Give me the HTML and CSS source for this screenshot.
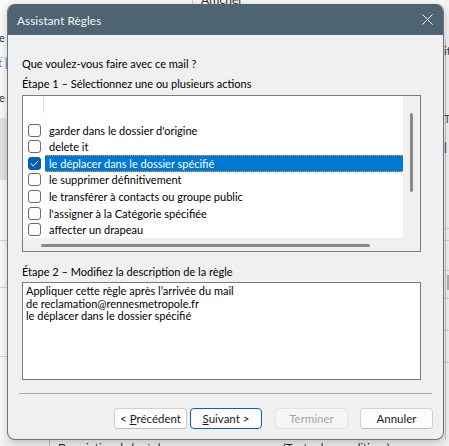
FILE: index.html
```html
<!DOCTYPE html>
<html lang="fr">
<head>
<meta charset="utf-8">
<title>Assistant Règles</title>
<link rel="stylesheet" href="styles.css">
</head>
<body>
<div class="backdrop">
  <div class="bg-top-text">Afficher</div>
  <div class="bg-top-line"></div>
  <div class="bg-left">
    <div class="bl-text bl-se">Se</div>
    <div class="bl-line bl-l1"></div>
    <div class="bl-text bl-t">t |</div>
    <div class="bl-text bl-e">e</div>
    <div class="bl-band"></div>
    <div class="bl-line bl-l2"></div>
    <div class="bl-line bl-l3"></div>
    <div class="bl-line bl-l4"></div>
  </div>
  <div class="bg-right">
    <div class="br-vline"></div>
    <div class="br-text br-it">it</div>
    <div class="br-text br-te">Te</div>
    <div class="br-text br-bar">|</div>
    <div class="br-line br-l1"></div>
    <div class="br-line br-l2"></div>
    <div class="br-line br-l3"></div>
    <div class="br-line br-l4"></div>
    <div class="br-line br-l5"></div>
    <div class="br-line br-l6"></div>
    <div class="br-block"></div>
  </div>
  <div class="bg-bottom">
    <div class="bb-vline"></div>
    <div class="bb-text bb-t1">Description de la règle</div>
    <div class="bb-text bb-t2">(Toutes les conditions)</div>
  </div>
</div>

<div class="dialog">
  <div class="titlebar">
    <span class="title">Assistant Règles</span>
    <svg class="close" width="11" height="11" viewBox="0 0 11 11"><path d="M0.5 0.5 L10.5 10.5 M10.5 0.5 L0.5 10.5" stroke="#ffffff" stroke-width="1" fill="none"/></svg>
  </div>
  <div class="content">
    <div class="label">Que voulez-vous faire avec ce mail ?</div>
    <div class="label step1">Étape 1 – Sélectionnez une ou plusieurs actions</div>
    <div class="listbox">
      <div class="list-main">
        <div class="list-view">
          <div class="list-head"><span class="head-sep"></span></div>
          <div class="row"><span class="cb"></span><span class="txt">garder dans le dossier d'origine</span></div>
          <div class="row"><span class="cb"></span><span class="txt">delete it</span></div>
          <div class="row selected"><span class="cb checked"><svg width="9" height="7" viewBox="0 0 9 7"><path d="M0.8 3.6 L3.2 5.9 L8.2 0.9" stroke="#ffffff" stroke-width="1" fill="none"/></svg></span><span class="txt">le déplacer dans le dossier spécifié</span></div>
          <div class="row"><span class="cb"></span><span class="txt">le supprimer définitivement</span></div>
          <div class="row"><span class="cb"></span><span class="txt">le transférer à contacts ou groupe public</span></div>
          <div class="row"><span class="cb"></span><span class="txt">l'assigner à la Catégorie spécifiée</span></div>
          <div class="row"><span class="cb"></span><span class="txt">affecter un drapeau</span></div>
        </div>
        <div class="vscroll"><div class="vthumb"></div></div>
      </div>
      <div class="hscroll"><div class="hthumb"></div></div>
    </div>
    <div class="label step2">Étape 2 – Modifiez la description de la règle</div>
    <div class="desc">
      <div class="desc-line">Appliquer cette règle après l’arrivée du mail</div>
      <div class="desc-line">de reclamation@rennesmetropole.fr</div>
      <div class="desc-line">le déplacer dans le dossier spécifié</div>
    </div>
    <div class="sep"></div>
    <div class="buttons">
      <button class="btn btn-prev"><span class="btn-label">&lt; <u>P</u>récédent</span></button>
      <button class="btn btn-next"><span class="btn-label"><u>S</u>uivant &gt;</span></button>
      <button class="btn btn-finish" disabled><span class="btn-label">Terminer</span></button>
      <button class="btn btn-cancel"><span class="btn-label">Annuler</span></button>
    </div>
  </div>
</div>
</body>
</html>
```

FILE: styles.css
```css
* { box-sizing: border-box; margin: 0; padding: 0; }
html, body { width: 449px; height: 446px; overflow: hidden; }
body {
  position: relative;
  background: #f6f6f6;
  font-family: "Lato", "Noto Sans", sans-serif;
  font-size: 11px;
  color: #000;
}

/* ---------- backdrop (outlook window behind the dialog) ---------- */
.backdrop { position: absolute; inset: 0; }
.bg-top-text { position: absolute; left: 201px; top: -8px; font-size: 12px; color: #333; }
.bg-top-line { position: absolute; left: 192px; top: 0; width: 1px; height: 5px; background: #c8c8c8; }
.bg-left { position: absolute; left: 0; top: 0; width: 8px; height: 446px; background: #fafafa; }
.bl-text { position: absolute; font-size: 11px; color: #333; }
.bl-se { left: -7px; top: 31px; }
.bl-t { left: -2px; top: 56px; color: #2a6db0; }
.bl-e { left: -1px; top: 91px; }
.bl-band { position: absolute; left: 0; top: 118px; width: 8px; height: 62px; background: #e3e3e3; }
.bl-line { position: absolute; left: 0; width: 8px; height: 1px; background: #d6d6d6; }
.bl-l1 { top: 57px; }
.bl-l2 { top: 240px; }
.bl-l3 { top: 287px; }
.bl-l4 { top: 356px; }

.bg-right { position: absolute; left: 443px; top: 0; width: 6px; height: 446px; background: #f3f3f3; }
.br-vline { position: absolute; left: 2px; top: 40px; width: 1px; height: 400px; background: #c9c9c9; }
.br-text { position: absolute; font-size: 11px; color: #333; }
.br-it { left: 1px; top: 44px; }
.br-te { left: 1px; top: 112px; color: #6b4a2a; }
.br-bar { left: 1px; top: 140px; color: #3b3b8a; font-weight: bold; }
.br-line { position: absolute; left: 0; width: 6px; height: 1px; background: #d0d0d0; }
.br-l1 { top: 228px; }
.br-l2 { top: 240px; }
.br-l3 { top: 270px; }
.br-l4 { top: 298px; }
.br-l5 { top: 330px; }
.br-l6 { top: 362px; }
.br-block { position: absolute; left: 4px; top: 275px; width: 2px; height: 15px; background: #b0b0b0; }

.bg-bottom { position: absolute; left: 0; top: 440px; width: 449px; height: 6px; background: #f2f2f2; overflow: hidden; }
.bb-vline { position: absolute; left: 49px; top: 0; width: 1px; height: 6px; background: #bdbdbd; }
.bb-text { position: absolute; top: 1px; font-size: 11px; color: #222; }
.bb-t1 { left: 58px; }
.bb-t2 { left: 283px; }

/* ---------- dialog ---------- */
.dialog {
  position: absolute;
  left: 7px;
  top: 4px;
  width: 437px;
  height: 436px;
  display: flex;
  flex-direction: column;
  background: #f0f0f0;
  border: 1px solid #6f7377;
  border-top: 0;
  border-radius: 8px;
  overflow: hidden;
  box-shadow: 0 3px 10px rgba(0, 0, 0, 0.22);
}
.titlebar {
  flex: 0 0 31px;
  height: 31px;
  background: #4f6472;
  display: flex;
  align-items: center;
  justify-content: space-between;
  padding: 0 10px 0 9px;
}
.title { color: #f4f6f7; font-size: 11.7px; letter-spacing: 0.1px; }
.close { display: block; }

.content {
  flex: 1;
  display: flex;
  flex-direction: column;
  padding: 21px 10px 10px 14px;
}
.label { height: 16px; line-height: 16px; white-space: nowrap; }
.step1 { margin-top: 4px; }
.step2 { margin-top: 12px; }

/* ---------- list box ---------- */
.listbox {
  margin-top: 3px;
  width: 399px;
  height: 157px;
  border: 1px solid #7a7d80;
  background: #f0f0f0;
  display: flex;
  flex-direction: column;
}
.list-main { flex: 0 0 140px; display: flex; }
.list-view {
  flex: 1;
  background: #ffffff;
  border-bottom-right-radius: 3px;
  overflow: hidden;
}
.list-head { height: 25.7px; position: relative; }
.head-sep { position: absolute; left: 20px; top: 0; width: 1px; height: 17px; background: #e2e2e2; }
.row { height: 16.67px; display: flex; align-items: center; white-space: nowrap; }
.cb {
  flex: 0 0 13px;
  width: 13px;
  height: 13px;
  margin-left: 5px;
  margin-right: 4px;
  border: 1px solid #6b6b6b;
  border-radius: 3px;
  background: #fdfdfd;
  display: flex;
  align-items: center;
  justify-content: center;
}
.cb.checked { background: #005fb8; border-color: #005fb8; }
.cb svg { display: block; }
.txt { flex: 1; height: 100%; display: flex; align-items: center; padding-left: 4px; }
.selected .txt {
  background: #0078d4;
  color: #ffffff;
  border-top: 1px dotted #e8a33a;
  border-bottom: 1px dotted #e8a33a;
}
.vscroll { flex: 0 0 17px; position: relative; }
.vthumb { position: absolute; left: 7px; top: 17px; width: 3px; height: 79px; border-radius: 2px; background: #8a8a8a; }
.hscroll { flex: 1; position: relative; }
.hthumb { position: absolute; left: 18px; top: 6px; width: 329px; height: 3px; border-radius: 2px; background: #8a8a8a; }

/* ---------- description ---------- */
.desc {
  margin-top: 2px;
  width: 399px;
  height: 98px;
  border: 1px solid #7a7d80;
  background: #ffffff;
  padding: 2px 3px;
}
.desc-line { height: 12.5px; line-height: 12.5px; white-space: nowrap; }

.sep {
  margin-top: 13px;
  margin-left: -3px;
  width: 413px;
  height: 1px;
  background: #a9a9a9;
}

/* ---------- buttons ---------- */
.buttons {
  margin-top: 14px;
  display: flex;
  justify-content: flex-end;
}
.btn {
  width: 73px;
  height: 21px;
  font-family: inherit;
  font-size: 11.5px;
  color: #1b1b1b;
  background: #fdfdfd;
  border: 1px solid #d0d0d0;
  border-bottom-color: #bcbcbc;
  border-radius: 4px;
  display: flex;
  align-items: center;
  justify-content: center;
}
.btn-label { white-space: pre; }
.btn u { text-decoration: underline; text-underline-offset: 1px; }
.btn-next { width: 72px; margin-left: 3px; border-color: #0067c0; }
.btn-finish { margin-left: 13px; background: #f5f5f5; border-color: #e3e3e3; color: #a2a2a2; }
.btn-cancel { margin-left: 12px; }
```
